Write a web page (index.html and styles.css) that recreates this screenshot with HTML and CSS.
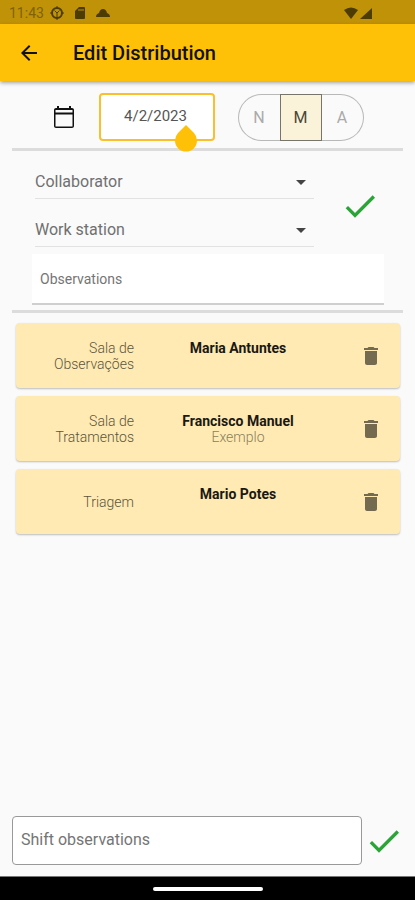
FILE: index.html
```
<!DOCTYPE html>
<html lang="en">
<head>
    <meta charset="UTF-8">
    <meta name="viewport" content="width=device-width, initial-scale=1.0">
    <title>Edit Distribution</title>
    <link rel="stylesheet" href="styles.css">
</head>
<body>
    <div class="status">
        <span class="time">11:43</span>
        <svg width="14" height="14" viewBox="0 0 14 14"><circle cx="7" cy="7" r="5" fill="none" stroke="currentColor" stroke-width="2"/><path d="M4.500 4.500 7 7l2.500-2.500M7 7v4M7 0v2M7 12v2M0 7h2M12 7h2" fill="none" stroke="currentColor"/></svg>
        <svg class="sd" width="12" height="14" viewBox="0 0 12 14"><path d="M5 1h5q1 0 1 1v10q0 1-1 1H2q-1 0-1-1V5z" fill="currentColor"/><path d="M5 3v2M7 3v2M9 3v2" stroke="#bf9208"/></svg>
        <svg class="cloud" width="14" height="14" viewBox="0 0 14 14"><path d="M0 11q0-3 3-4 1-4 4-4 3 0 4 4 3 1 3 4z" fill="currentColor"/></svg>
        <svg class="wifi" width="14" height="14" viewBox="0 0 14 14"><path d="M0 4q7-5 14 0L7 13z" fill="currentColor"/></svg>
        <svg width="12" height="14" viewBox="0 0 12 14"><path d="M12 2v11H0z" fill="currentColor"/></svg>
    </div>
    <header class="appbar">
        <button class="icon-btn" type="button" aria-label="Back">
            <svg width="24" height="24" viewBox="0 0 24 24"><path d="M20 11H7.830l5.590-5.590L12 4l-8 8 8 8 1.410-1.410L7.830 13H20z" fill="currentColor"/></svg>
        </button>
        <h1>Edit Distribution</h1>
    </header>

    <main>
        <div class="shift">
            <button class="icon-btn" type="button" aria-label="Pick a date">
                <svg width="24" height="24" viewBox="0 0 24 24"><path d="M20 3h-1V1h-2v2H7V1H5v2H4c-1.100 0-2 .9-2 2v16c0 1.100.9 2 2 2h16c1.100 0 2-.9 2-2V5c0-1.100-.9-2-2-2zm.5 18.500h-17V9.500h17zm0-14h-17V5h17z" fill="currentColor"/></svg>
            </button>
            <div class="date">
                <input type="text" value="4/2/2023" aria-label="Date">
                <svg class="handle" width="24" height="28" viewBox="0 0 24 28"><path d="M12 1l8 8a11 11 0 1 1-16 0z" fill="#ffc107"/></svg>
            </div>
            <div class="toggle">
                <button type="button">N</button>
                <button type="button" class="active">M</button>
                <button type="button">A</button>
            </div>
        </div>

        <form class="entry">
            <div class="fields">
                <div class="picker">
                    <select aria-label="Collaborator">
                        <option>Collaborator</option>
                    </select>
                    <svg width="10" height="5" viewBox="0 0 10 5"><path d="M0 0h10L5 5z" fill="currentColor"/></svg>
                </div>
                <div class="picker">
                    <select aria-label="Work station">
                        <option>Work station</option>
                    </select>
                    <svg width="10" height="5" viewBox="0 0 10 5"><path d="M0 0h10L5 5z" fill="currentColor"/></svg>
                </div>
            </div>
            <button class="icon-btn check" type="button" aria-label="Add">
                <svg width="40" height="40" viewBox="0 0 24 24"><path d="M9 16.170 4.830 12l-1.420 1.410L9 19 21 7l-1.410-1.410z" fill="currentColor"/></svg>
            </button>
            <input class="obs" type="text" placeholder="Observations" aria-label="Observations">
        </form>

        <ul class="list">
            <li class="card">
                <span class="station">Sala de Observações</span>
                <div class="person"><strong>Maria Antuntes</strong></div>
                <button class="icon-btn" type="button" aria-label="Delete">
                    <svg width="24" height="24" viewBox="0 0 24 24"><path d="M6 19c0 1.100.9 2 2 2h8c1.100 0 2-.9 2-2V7H6zM19 4h-3.500l-1-1h-5l-1 1H5v2h14z" fill="currentColor"/></svg>
                </button>
            </li>
            <li class="card">
                <span class="station">Sala de Tratamentos</span>
                <div class="person"><strong>Francisco Manuel</strong><span>Exemplo</span></div>
                <button class="icon-btn" type="button" aria-label="Delete">
                    <svg width="24" height="24" viewBox="0 0 24 24"><path d="M6 19c0 1.100.9 2 2 2h8c1.100 0 2-.9 2-2V7H6zM19 4h-3.500l-1-1h-5l-1 1H5v2h14z" fill="currentColor"/></svg>
                </button>
            </li>
            <li class="card">
                <span class="station">Triagem</span>
                <div class="person"><strong>Mario Potes</strong></div>
                <button class="icon-btn" type="button" aria-label="Delete">
                    <svg width="24" height="24" viewBox="0 0 24 24"><path d="M6 19c0 1.100.9 2 2 2h8c1.100 0 2-.9 2-2V7H6zM19 4h-3.500l-1-1h-5l-1 1H5v2h14z" fill="currentColor"/></svg>
                </button>
            </li>
        </ul>
    </main>

    <form class="bottom">
        <input type="text" placeholder="Shift observations" aria-label="Shift observations">
        <button class="icon-btn check" type="button" aria-label="Save">
            <svg width="40" height="40" viewBox="0 0 24 24"><path d="M9 16.170 4.830 12l-1.420 1.410L9 19 21 7l-1.410-1.410z" fill="currentColor"/></svg>
        </button>
    </form>
    <div class="navbar"><div class="pill"></div></div>
</body>
</html>
```
FILE: styles.css
```
* {
    box-sizing: border-box;
}

body {
    margin: 0;
    min-height: 100vh;
    display: flex;
    flex-direction: column;
    background: #fafafa;
    color: #111;
    font-family: Roboto, sans-serif;
    font-size: 16px;
}

button, input, select {
    font-family: inherit;
    font-size: 16px;
}

svg {
    display: block;
}

.icon-btn {
    padding: 0;
    border: none;
    background: none;
    color: inherit;
    cursor: pointer;
}

.check {
    color: #2ba437;
}

/* top bars */
.status {
    display: flex;
    align-items: center;
    height: 24px;
    padding: 2px 43px 0 9px;
    background: #bf9208;
    color: #4d3b04;
}

.time {
    margin-right: 6px;
    font-size: 14px;
    color: #80620a;
}

.sd {
    margin: 0 10px;
}

.wifi {
    margin-left: auto;
    margin-right: 2px;
}

.appbar {
    display: flex;
    align-items: center;
    gap: 32px;
    height: 57px;
    padding: 0 17px;
    background: #ffc107;
    box-shadow: 0 2px 4px rgba(0, 0, 0, 0.35);
}

h1 {
    margin: 0;
    font-size: 20px;
    font-weight: 500;
}

main {
    flex: 1;
}

/* date and shift */
.shift {
    display: flex;
    justify-content: center;
    align-items: center;
    gap: 23px;
    margin: 0 12px;
    padding: 12px 0 7px;
    border-bottom: 3px solid #dcdcdc;
}

.date {
    position: relative;
    width: 116px;
}

.date input {
    display: block;
    width: 100%;
    height: 48px;
    padding: 0 2px 2px 0;
    border: 2px solid #fbbf2d;
    border-radius: 4px;
    background: #fff;
    color: #555;
    font-size: 15px;
    text-align: center;
}

.handle {
    position: absolute;
    left: 75px;
    top: 31px;
}

.toggle {
    display: flex;
}

.toggle button {
    width: 42px;
    height: 47px;
    padding: 0;
    border: 1px solid #b8b8b8;
    background: none;
    color: #aaa;
}

.toggle button:first-child {
    border-right: none;
    border-radius: 24px 0 0 24px;
}

.toggle button:last-child {
    border-left: none;
    border-radius: 0 24px 24px 0;
}

.toggle .active {
    border-color: #77746a;
    background: #faf3da;
    color: #4a4636;
}

/* new entry */
.entry {
    display: grid;
    grid-template-columns: 1fr 44px;
    column-gap: 26px;
    align-items: center;
    margin: 0 12px;
    padding: 0 19px 5px 20px;
    border-bottom: 3px solid #dcdcdc;
}

.fields {
    padding: 0 0 7px 3px;
}

.picker {
    position: relative;
}

.picker select {
    display: block;
    width: 100%;
    height: 48px;
    padding: 14px 0 0;
    border: none;
    border-bottom: 1px solid #e2e2e2;
    border-radius: 0;
    background: none;
    color: #707070;
    appearance: none;
}

.picker svg {
    position: absolute;
    right: 8px;
    bottom: 14px;
    color: #444;
    pointer-events: none;
}

.entry .check {
    justify-self: start;
    padding-top: 6px;
}

.obs {
    grid-column: 1 / -1;
    width: 100%;
    height: 51px;
    padding: 0 8px;
    border: none;
    border-bottom: 2px solid #cfcfcf;
    background: #fff;
    font-size: 14px;
}

::placeholder {
    color: #757575;
    opacity: 1;
}

/* assigned people */
.list {
    display: grid;
    gap: 8px;
    margin: 0;
    padding: 10px 15px 10px 16px;
    list-style: none;
}

.card {
    display: grid;
    grid-template-columns: 95px 1fr 58px;
    align-items: center;
    min-height: 65px;
    padding-left: 23px;
    border-radius: 4px;
    background: #ffeab3;
    box-shadow: 0 1px 2px rgba(0, 0, 0, 0.25);
    font-size: 14px;
    line-height: 16px;
}

.station {
    color: #5c543c;
    font-weight: 300;
    text-align: right;
}

.person {
    display: flex;
    flex-direction: column;
    min-height: 32px;
    text-align: center;
    color: #8a7e5c;
    font-weight: 300;
}

.person strong {
    font-weight: 700;
    color: #1a1812;
}

.card .icon-btn {
    display: flex;
    justify-content: center;
    color: #736a50;
}

/* bottom */
.bottom {
    display: flex;
    align-items: center;
    gap: 2px;
    padding: 0 11px 11px 12px;
}

.bottom input {
    flex: 1;
    min-width: 0;
    height: 49px;
    padding: 0 8px 2px;
    border: 1px solid #999;
    border-radius: 4px;
    background: #fff;
}

.navbar {
    display: flex;
    justify-content: center;
    align-items: center;
    height: 24px;
    border-top: 1px solid #777;
    background: #000;
}

.pill {
    width: 110px;
    height: 4px;
    border-radius: 2px;
    background: #fff;
}
```
